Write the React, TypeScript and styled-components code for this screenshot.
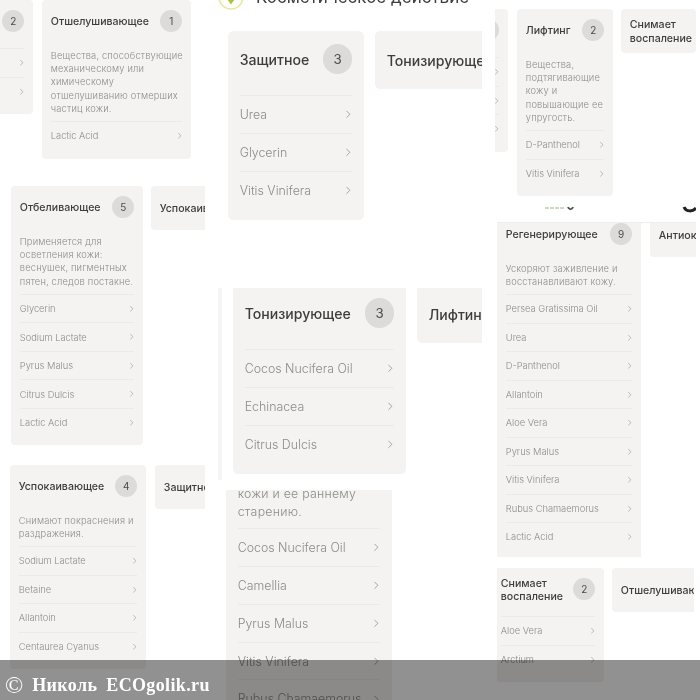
import React from "react";
import styled, { createGlobalStyle } from "styled-components";
import { ChevronRight } from "lucide-react";

type CardProps = {
  title?: React.ReactNode;
  count?: number;
  text?: React.ReactNode;
  items?: string[];
  size?: number;
  width?: number;
  pull?: number;
};

function Card({ title, count, text, items, size = 10, width, pull = 0 }: CardProps) {
  return (
    <CardBox $size={size} $width={width} $pull={pull}>
      {title && (
        <CardHead>
          <CardTitle>{title}</CardTitle>
          {count !== undefined && <Badge>{count}</Badge>}
        </CardHead>
      )}
      {text && <Desc $bare={!title}>{text}</Desc>}
      {items && (
        <RowList $gap={!text}>
          {items.map((item) => (
            <Row key={item}>
              <span>{item}</span>
              <ChevronRight strokeWidth={1.5} />
            </Row>
          ))}
        </RowList>
      )}
    </CardBox>
  );
}

function Tab({ title, size = 10, width }: { title: React.ReactNode; size?: number; width?: number }) {
  return (
    <TabBox $size={size} $width={width}>
      <CardTitle>{title}</CardTitle>
    </TabBox>
  );
}

export default function App() {
  return (
    <Canvas>
      <GlobalStyle />

      <Shot $x={0} $y={0} $w={205} $h={175}>
        <Strip>
          <Card title="Лифтинг" count={2} width={100} pull={-67} items={["Aloe Vera", "Arctium"]} />
          <Card
            title="Отшелушивающее"
            count={1}
            width={149}
            text={
              <>
                Вещества, способствующие
                <br />
                механическому или
                <br />
                химическому
                <br />
                отшелушиванию отмерших
                <br />
                частиц кожи.
              </>
            }
            items={["Lactic Acid"]}
          />
        </Strip>
      </Shot>

      <Shot $x={0} $y={186} $w={205} $h={265}>
        <Strip $gap={8}>
          <Card
            title="Отбеливающее"
            count={5}
            width={132}
            pull={11}
            text={
              <>
                Применяется для
                <br />
                осветления кожи:
                <br />
                веснушек, пигментных
                <br />
                пятен, следов постакне.
              </>
            }
            items={["Glycerin", "Sodium Lactate", "Pyrus Malus", "Citrus Dulcis", "Lactic Acid"]}
          />
          <Tab title="Успокаивающее" />
        </Strip>
      </Shot>

      <Shot $x={0} $y={465} $w={205} $h={235}>
        <Strip>
          <Card
            title="Успокаивающее"
            count={4}
            width={136}
            pull={10}
            text={
              <>
                Снимают покраснения и
                <br />
                раздражения.
              </>
            }
            items={["Sodium Lactate", "Betaine", "Allantoin", "Centaurea Cyanus"]}
          />
          <Tab title="Защитное" />
        </Strip>
      </Shot>

      <Shot $x={205} $y={0} $w={277} $h={280}>
        <PageHead>
          <svg width="26" height="26" viewBox="0 0 26 26">
            <circle cx="13" cy="13" r="12" fill="#fff" stroke="#e8e89a" strokeWidth="1.6" />
            <path d="M13 20.5l-4-5.5h8z" fill="#a8c63c" />
          </svg>
          <PageTitle>Косметическое действие</PageTitle>
        </PageHead>
        <Strip $gap={11}>
          <Card title="Защитное" count={3} size={13.3} width={136} pull={23} items={["Urea", "Glycerin", "Vitis Vinifera"]} />
          <Tab title="Тонизирующее" size={13.3} />
        </Strip>
      </Shot>

      <Shot $x={218} $y={288} $w={264} $h={192} $edge>
        <Strip $gap={11} $lift={-3}>
          <Card
            title="Тонизирующее"
            count={3}
            size={13.3}
            width={173}
            pull={11}
            items={["Cocos Nucifera Oil", "Echinacea", "Citrus Dulcis"]}
          />
          <Tab title="Лифтинг" size={13.3} />
        </Strip>
      </Shot>

      <Shot $x={218} $y={490} $w={190} $h={210}>
        <Strip $lift={-11}>
          <Card
            size={13.3}
            width={166}
            pull={8}
            text={
              <>
                кожи и ее раннему
                <br />
                старению.
              </>
            }
            items={["Cocos Nucifera Oil", "Camellia", "Pyrus Malus", "Vitis Vinifera", "Rubus Chamaemorus"]}
          />
        </Strip>
      </Shot>

      <Shot $x={495} $y={0} $w={201} $h={222}>
        <Strip $gap={8} $lift={9}>
          <Card title="Пептиды" count={2} width={100} pull={-87} items={["Urea", "Betaine", "Glycerin"]} />
          <Card
            title="Лифтинг"
            count={2}
            width={96}
            pull={1}
            text={
              <>
                Вещества,
                <br />
                подтягивающие
                <br />
                кожу и
                <br />
                повышающие ее
                <br />
                упругость.
              </>
            }
            items={["D-Panthenol", "Vitis Vinifera"]}
          />
          <Tab
            title={
              <>
                Снимает
                <br />
                воспаление
              </>
            }
            width={75}
          />
        </Strip>
        <Remnant width="201" height="222" viewBox="0 0 201 222">
          <path d="M50 208h4M55 208h4M60 208h4M65 208h4" stroke="#b5d3a8" strokeWidth="1.4" />
          <path d="M73 207c1 3 4 3 5 0" stroke="#555" strokeWidth="2" fill="none" />
          <path d="M189 207c2 5 9 5 12 1" stroke="#222" strokeWidth="3" fill="none" />
        </Remnant>
      </Shot>

      <Shot $x={497} $y={222} $w={199} $h={335} $rule>
        <Strip $lift={-10}>
          <Card
            title="Регенерирующее"
            count={9}
            width={144}
            text={
              <>
                Ускоряют заживление и
                <br />
                восстанавливают кожу.
              </>
            }
            items={[
              "Persea Gratissima Oil",
              "Urea",
              "D-Panthenol",
              "Allantoin",
              "Aloe Vera",
              "Pyrus Malus",
              "Vitis Vinifera",
              "Rubus Chamaemorus",
              "Lactic Acid",
            ]}
          />
          <Tab title="Антиоксидантное" />
        </Strip>
      </Shot>

      <Shot $x={497} $y={568} $w={197} $h={132}>
        <Strip $gap={8}>
          <Card
            title={
              <>
                Снимает
                <br />
                воспаление
              </>
            }
            count={2}
            width={112}
            pull={-5}
            items={["Aloe Vera", "Arctium"]}
          />
          <Tab title="Отшелушивающее" />
        </Strip>
      </Shot>

      <Watermark>
        <Copy>©</Copy>
        <span>Николь</span>
        <span>ECOgolik.ru</span>
      </Watermark>
    </Canvas>
  );
}

const GlobalStyle = createGlobalStyle`
  html, body {
    margin: 0;
    padding: 0;
    background: #fff;
  }
`;

const Canvas = styled.div`
  position: relative;
  width: 700px;
  height: 700px;
  overflow: hidden;
  background: #fff;
  font-family: Inter, "Open Sans", sans-serif;
  filter: blur(0.35px);
`;

const Shot = styled.section<{ $x: number; $y: number; $w: number; $h: number; $rule?: boolean; $edge?: boolean }>`
  position: absolute;
  left: ${(p) => p.$x}px;
  top: ${(p) => p.$y}px;
  width: ${(p) => p.$w}px;
  height: ${(p) => p.$h}px;
  overflow: hidden;
  border-top: ${(p) => (p.$rule ? "1px solid #eee" : "none")};
  border-left: ${(p) => (p.$edge ? "4px solid #f6f5f4" : "none")};
  box-sizing: border-box;
`;

const Strip = styled.div<{ $gap?: number; $lift?: number }>`
  display: flex;
  align-items: flex-start;
  gap: ${(p) => p.$gap ?? 9}px;
  margin-top: ${(p) => p.$lift ?? 0}px;
`;

const CardBox = styled.article<{ $size: number; $width?: number; $pull: number }>`
  flex: none;
  box-sizing: border-box;
  width: ${(p) => p.$width}px;
  margin-left: ${(p) => p.$pull}px;
  padding: 1em 0.88em 0.9em;
  border-radius: 0.4em;
  background: #f4f3f1;
  font-size: ${(p) => p.$size}px;
`;

const TabBox = styled.div<{ $size: number; $width?: number }>`
  flex: none;
  display: flex;
  align-items: center;
  box-sizing: border-box;
  width: ${(p) => (p.$width ? `${p.$width}px` : "auto")};
  min-height: 4.35em;
  padding: 0 0.88em;
  border-radius: 0.4em;
  background: #f4f3f1;
  font-size: ${(p) => p.$size}px;
`;

const CardHead = styled.header`
  display: flex;
  align-items: center;
  justify-content: space-between;
  height: 2.2em;
`;

const CardTitle = styled.h3`
  margin: 0;
  padding-top: 0.15em;
  color: #3d3d3d;
  font-size: 1.06em;
  font-weight: 500;
  line-height: 1.25;
  white-space: nowrap;
`;

const Badge = styled.span`
  flex: none;
  display: flex;
  align-items: center;
  justify-content: center;
  width: 2.2em;
  height: 2.2em;
  border-radius: 50%;
  background: #dcdbd9;
  color: #4a4a4a;
  font-size: 1em;
`;

const Desc = styled.p<{ $bare?: boolean }>`
  margin: ${(p) => (p.$bare ? "-0.6em" : "1.8em")} 0 0.6em;
  color: #8b8b8b;
  font-size: 0.93em;
  font-weight: 300;
  line-height: 1.44;
  letter-spacing: 0.02em;
  white-space: nowrap;
`;

const RowList = styled.ul<{ $gap: boolean }>`
  margin: ${(p) => (p.$gap ? "1.6em" : "0")} 0 0;
  padding: 0;
  list-style: none;
`;

const Row = styled.li`
  display: flex;
  align-items: center;
  justify-content: space-between;
  height: 2.85em;
  box-sizing: border-box;
  border-top: 1px solid #eaeae8;
  color: #8b8b8b;
  font-weight: 300;
  white-space: nowrap;

  span {
    font-size: 0.93em;
  }

  svg {
    flex: none;
    width: 0.95em;
    height: 0.95em;
    margin-right: -0.2em;
    color: #8f8f8f;
  }
`;

const PageHead = styled.div`
  display: flex;
  align-items: center;
  gap: 12px;
  height: 42px;
  margin: -24px 0 0 13px;
  padding-bottom: 13px;
`;

const PageTitle = styled.h2`
  margin: 0;
  color: #3d3d3d;
  font-size: 17px;
  font-weight: 400;
  white-space: nowrap;
`;

const Remnant = styled.svg`
  position: absolute;
  left: 0;
  top: 0;
  pointer-events: none;
`;

const Watermark = styled.div`
  position: absolute;
  left: 0;
  right: 0;
  bottom: 0;
  display: flex;
  align-items: center;
  gap: 9px;
  height: 40px;
  box-sizing: border-box;
  padding: 10px 0 0 5px;
  background: rgba(0, 0, 0, 0.43);
  color: #fff;
  font-family: "Liberation Serif", serif;
  font-size: 18px;
  font-weight: 700;
  letter-spacing: 0.02em;
  white-space: nowrap;
`;

const Copy = styled.span`
  font-size: 24px;
  font-weight: 400;
  letter-spacing: 0;
`;
